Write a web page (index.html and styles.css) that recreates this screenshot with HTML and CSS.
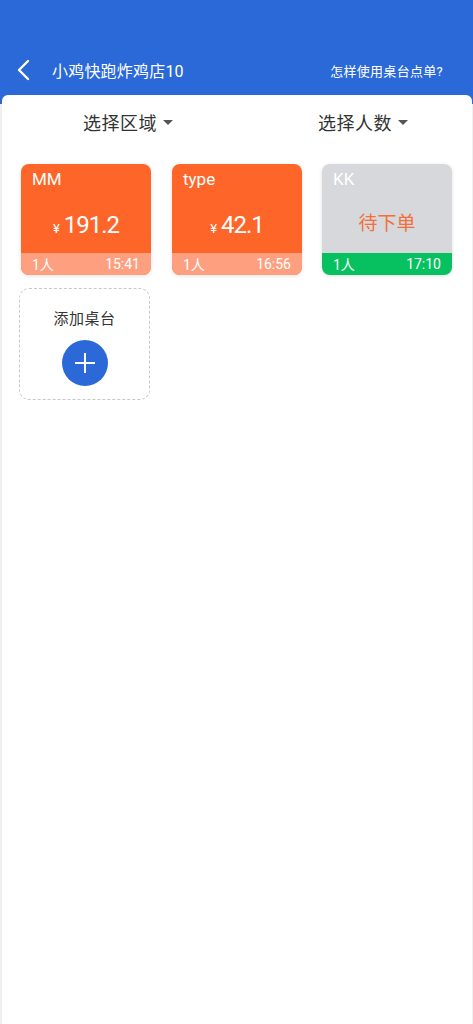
FILE: index.html
```html
<!DOCTYPE html>
<html lang="zh">
<head>
<meta charset="utf-8">
<link rel="stylesheet" href="styles.css">
</head>
<body>
<div class="app">
  <header class="topbar">
    <div class="nav">
      <svg class="back" width="16" height="24" viewBox="0 0 16 24"><path d="M12 3 L3 12 L12 21" fill="none" stroke="#fff" stroke-width="2.4" stroke-linecap="round" stroke-linejoin="round"/></svg>
      <span class="title">小鸡快跑炸鸡店10</span>
      <span class="help">怎样使用桌台点单?</span>
    </div>
  </header>
  <main class="panel">
    <div class="filters">
      <div class="filter">选择区域<span class="caret"></span></div>
      <div class="filter">选择人数<span class="caret"></span></div>
    </div>
    <div class="grid">
      <div class="table busy">
        <div class="name">MM</div>
        <div class="price"><span class="yen">¥</span>191.2</div>
        <div class="foot"><span>1人</span><span>15:41</span></div>
      </div>
      <div class="table busy">
        <div class="name">type</div>
        <div class="price"><span class="yen">¥</span>42.1</div>
        <div class="foot"><span>1人</span><span>16:56</span></div>
      </div>
      <div class="table idle">
        <div class="name">KK</div>
        <div class="pending">待下单</div>
        <div class="foot"><span>1人</span><span>17:10</span></div>
      </div>
      <div class="add">
        <div class="add-label">添加桌台</div>
        <div class="plus">
          <svg width="22" height="22" viewBox="0 0 22 22"><path d="M11 1 V21 M1 11 H21" stroke="#fff" stroke-width="2"/></svg>
        </div>
      </div>
    </div>
  </main>
</div>
</body>
</html>
```
FILE: styles.css
```css
* { box-sizing: border-box; }
html, body { margin: 0; padding: 0; }
body {
  font-family: Roboto, "Noto Sans CJK SC", sans-serif;
  background: #f2f2f2;
  width: 473px;
  height: 1024px;
  overflow: hidden;
}
.app { display: flex; flex-direction: column; height: 1024px; background: #f0f0f0; }
.topbar {
  background: #2b69d9;
  height: 104px;
  padding-top: 56px;
  flex: none;
}
.nav {
  display: flex;
  align-items: center;
  height: 28px;
  padding: 0 0 0 16px;
  color: #fff;
}
.back { flex: none; }
.title {
  margin-left: 20px;
  font-size: 16px;
  letter-spacing: 0.2px;
  flex: 1;
}
.help {
  font-size: 13px;
  margin-right: 30px;
  letter-spacing: 0.3px;
}
.panel {
  flex: 1;
  background: #fff;
  margin: -9px 1px 0 2px;
  border-radius: 6px 6px 0 0;
}
.filters {
  display: grid;
  grid-template-columns: 1fr 1fr;
  height: 54px;
  align-items: center;
  padding: 0 4px 0 44px;
}
.filter {
  display: flex;
  align-items: center;
  justify-content: flex-start;
  font-size: 18px;
  color: #333;
  letter-spacing: 0.5px;
}
.filter:first-child { padding-left: 37px; }
.filter:last-child { padding-left: 61px; }
.caret {
  width: 0; height: 0;
  border-left: 5px solid transparent;
  border-right: 5px solid transparent;
  border-top: 5px solid #555;
  margin-left: 6px;
}
.grid {
  display: grid;
  grid-template-columns: 132px 132px 131px;
  column-gap: 19px;
  row-gap: 13px;
  padding: 15px 0 0 17px;
}
.table {
  height: 111px;
  width: 130px;
  margin-left: 2px;
  border-radius: 8px;
  display: flex;
  flex-direction: column;
  overflow: hidden;
  color: #fff;
  box-shadow: 0 1px 4px rgba(0,0,0,0.12);
}
.grid .idle { margin-left: 1px; }
.busy { background: #fe6529; }
.idle { background: #d6d8db; }
.name {
  font-size: 17px;
  padding: 3px 0 0 11px;
  height: 30px;
  line-height: 24px;
}
.price {
  flex: 1;
  text-align: center;
  font-size: 24px;
  letter-spacing: -1px;
  line-height: 30px;
  padding-top: 16px;
}
.yen { font-size: 13px; margin-right: 4px; letter-spacing: 0; }
.pending {
  flex: 1;
  text-align: center;
  font-size: 19px;
  color: #f0703a;
  padding-top: 15px;
  line-height: 30px;
}
.foot {
  height: 22px;
  display: flex;
  justify-content: space-between;
  align-items: center;
  padding: 0 11px;
  font-size: 14px;
  background: #fea080;
}
.idle .foot { background: #07c160; }
.add {
  height: 112px;
  width: 131px;
  border: 1px dashed #c8c8c8;
  border-radius: 10px;
  display: flex;
  flex-direction: column;
  align-items: center;
}
.add-label {
  font-size: 15px;
  color: #333;
  margin-top: 18px;
  letter-spacing: 0.5px;
}
.plus {
  width: 46px;
  height: 46px;
  border-radius: 50%;
  background: #2b69d9;
  margin-top: 12px;
  display: flex;
  align-items: center;
  justify-content: center;
}
```
